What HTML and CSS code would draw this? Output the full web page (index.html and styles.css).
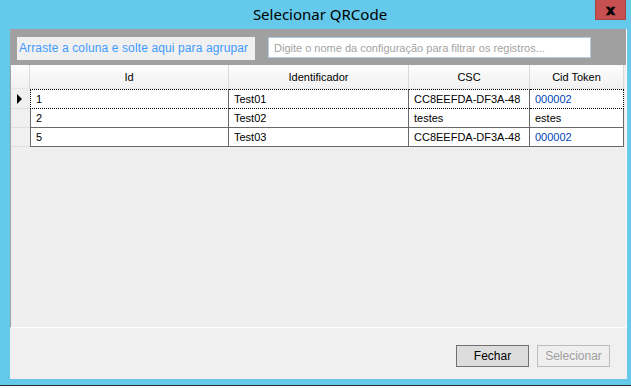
FILE: index.html
```html
<!DOCTYPE html>
<html lang="pt-BR">
<head>
  <meta charset="UTF-8">
  <title>Selecionar QRCode</title>
  <link rel="stylesheet" href="styles.css">
</head>
<body>
  <div class="window">
    <div class="titlebar">
      <span class="title">Selecionar QRCode</span>
      <button class="close">x</button>
    </div>

    <div class="client">
      <div class="grid-panel">
        <div class="group-bar">
          <div class="group-hint">Arraste a coluna e solte aqui para agrupar</div>
          <input class="filter" type="text" placeholder="Digite o nome da configuração para filtrar os registros...">
        </div>

        <table class="grid">
          <colgroup>
            <col class="c-row">
            <col class="c-id">
            <col class="c-ident">
            <col class="c-csc">
            <col class="c-token">
          </colgroup>
          <thead>
            <tr>
              <th class="row-head"></th>
              <th>Id</th>
              <th>Identificador</th>
              <th>CSC</th>
              <th>Cid Token</th>
            </tr>
          </thead>
          <tbody>
            <tr class="current">
              <td class="row-head"><span class="arrow"></span></td>
              <td>1</td>
              <td>Test01</td>
              <td>CC8EEFDA-DF3A-48</td>
              <td class="token">000002</td>
            </tr>
            <tr>
              <td class="row-head"></td>
              <td>2</td>
              <td>Test02</td>
              <td>testes</td>
              <td>estes</td>
            </tr>
            <tr>
              <td class="row-head"></td>
              <td>5</td>
              <td>Test03</td>
              <td>CC8EEFDA-DF3A-48</td>
              <td class="token">000002</td>
            </tr>
          </tbody>
        </table>
      </div>

      <div class="footer">
        <button class="btn btn-default">Fechar</button>
        <button class="btn" disabled>Selecionar</button>
      </div>
    </div>
  </div>
  <div class="taskbar"></div>
</body>
</html>
```

FILE: styles.css
```css
html, body {
  margin: 0;
  padding: 0;
}

body {
  width: 631px;
  height: 388px;
  overflow: hidden;
  background: #64c9ea;
  font-family: "Liberation Sans", Arial, sans-serif;
  font-size: 11px;
  color: #000;
}

.window {
  height: 385px;
}

.titlebar {
  position: relative;
  height: 29px;
  text-align: center;
}

.title {
  display: inline-block;
  padding-top: 4px;
  padding-left: 9px;
  font-family: "Noto Sans", "Open Sans", sans-serif;
  font-size: 15px;
  line-height: 20px;
  color: #000;
}

.close {
  position: absolute;
  top: 0;
  right: 5px;
  width: 31px;
  height: 20px;
  padding: 0;
  border: 1px solid #a84444;
  border-top: none;
  background: #c75050;
  font-family: "DejaVu Sans", sans-serif;
  font-size: 14px;
  font-weight: bold;
  line-height: 16px;
  color: #000;
  -webkit-text-stroke: 0.6px #000;
}

.client {
  margin-left: 10px;
  width: 617px;
  height: 350px;
  background: #f0f0f0;
}

.grid-panel {
  height: 298px;
  border-left: 1px solid #a0a0a0;
  border-right: 1px solid #fff;
  border-bottom: 1px solid #fff;
  background: #efefef;
}

.group-bar {
  display: flex;
  align-items: flex-start;
  height: 28px;
  padding: 8px 0 0 6px;
  background: #a0a0a0;
}

.group-hint {
  width: 236px;
  height: 23px;
  padding-left: 2px;
  background: #f0f0f0;
  color: #3d9bff;
  font-size: 12px;
  letter-spacing: 0.12px;
  line-height: 23px;
  white-space: nowrap;
}

.filter {
  box-sizing: border-box;
  width: 323px;
  height: 21px;
  margin: 0 0 0 13px;
  padding: 0 5px;
  border: 1px solid #b4cbe2;
  background: #fff;
  font-family: "Liberation Sans", Arial, sans-serif;
  font-size: 11px;
}

.filter::placeholder {
  color: #a3a3a3;
}

.grid {
  border-collapse: separate;
  border-spacing: 0;
  table-layout: fixed;
  width: 613px;
}

.c-row { width: 19px; }
.c-id { width: 199px; }
.c-ident { width: 180px; }
.c-csc { width: 121px; }
.c-token { width: 94px; }

.grid th {
  height: 23px;
  padding: 0;
  border-right: 1px solid #d9d9d9;
  border-bottom: 1px solid #e6e6e6;
  background: linear-gradient(#fdfdfd, #f1f1f1);
  font-weight: normal;
  text-align: center;
}

.grid td {
  height: 18px;
  padding: 0 0 0 5px;
  border-right: 1px solid #696969;
  border-bottom: 1px solid #696969;
  background: #fff;
  white-space: nowrap;
  overflow: hidden;
}

.grid td:nth-child(2) {
  border-left: 1px solid #696969;
}

.grid td.row-head {
  padding: 0;
  border-right: none;
  border-bottom: 1px solid #dedede;
  background: #f0f0f0;
}

.grid tr.current td {
  border-top: 1px dotted #000;
  border-bottom: 1px dotted #000;
}

.grid tr.current td:nth-child(2) {
  border-left: 1px dotted #000;
}

.grid tr.current td:last-child {
  border-right: 1px dotted #000;
}

.grid tr.current td.row-head {
  border-top: none;
  border-bottom: 1px solid #dedede;
}

.grid td.token {
  color: #0044bb;
}

.arrow {
  display: block;
  width: 0;
  height: 0;
  margin-left: 6px;
  border-left: 5px solid #000;
  border-top: 5px solid transparent;
  border-bottom: 5px solid transparent;
}

.footer {
  display: flex;
  justify-content: flex-end;
  gap: 8px;
  padding: 17px 17px 0 0;
}

.btn {
  width: 73px;
  height: 22px;
  padding: 0;
  border: 1px solid #bcbcbc;
  background: #efefef;
  font-family: "Liberation Sans", Arial, sans-serif;
  font-size: 12px;
  color: #a0a0a0;
}

.btn-default {
  border-color: #707070;
  background: #dddddd;
  color: #000;
}

.taskbar {
  height: 2px;
  border-top: 1px solid #2b2b2b;
  background: #fff;
}
```
